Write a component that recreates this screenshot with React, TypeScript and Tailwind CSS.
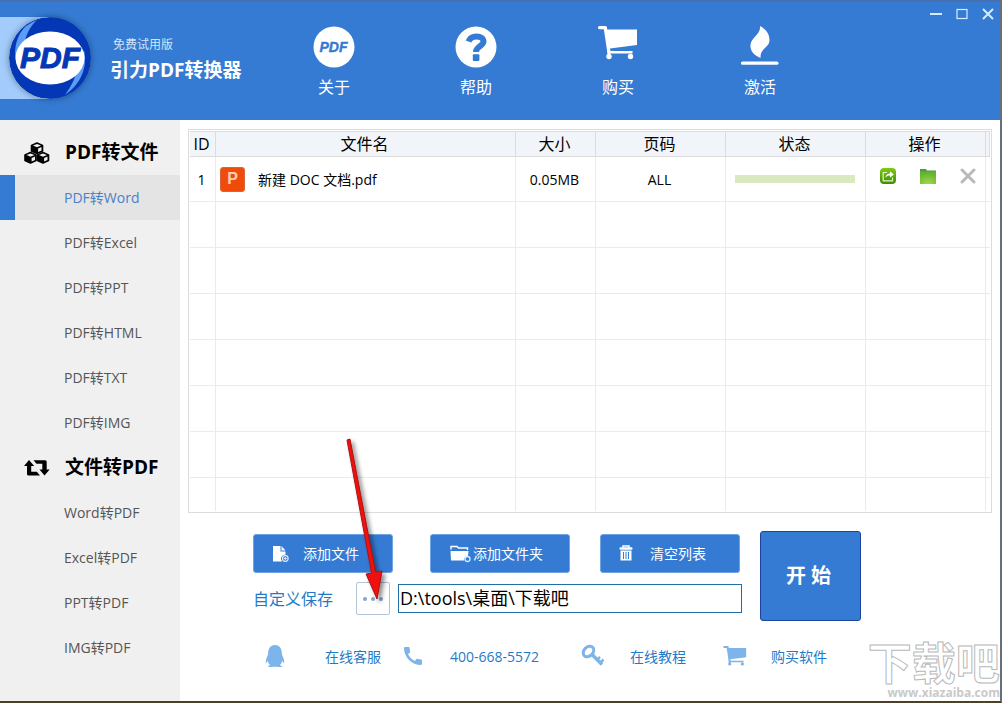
import React from 'react';
import { FaQq } from 'react-icons/fa';
import { MdCall } from 'react-icons/md';

type IconProps = { className?: string };

const LogoIcon = ({ className }: IconProps) => (
  <svg className={className} viewBox="0 0 82 82" aria-hidden="true">
    <circle cx="41" cy="41" r="41" fill="#0437b5" />
    <path d="M17 9 C9 16 4 30 7 44 L15 28 C17 18 20 11 28 2.500 Z" fill="#5b9cf5" />
    <path d="M75 33 C79 50 72 67 56 78 C63 68 67 60 67 54 Z" fill="#5b9cf5" />
    <ellipse cx="41" cy="41" rx="34.500" ry="26.500" fill="#fff" />
    <text
      x="41"
      y="51"
      textAnchor="middle"
      fontFamily="Liberation Sans, sans-serif"
      fontWeight="bold"
      fontStyle="italic"
      fontSize="30"
      fill="#0437b5"
      stroke="#0437b5"
    >
      PDF
    </text>
  </svg>
);

const AboutIcon = ({ className }: IconProps) => (
  <svg className={className} viewBox="0 0 42 42" aria-hidden="true">
    <circle cx="21" cy="21" r="20.500" fill="#fff" />
    <text
      x="20.500"
      y="26"
      textAnchor="middle"
      fontFamily="Liberation Sans, sans-serif"
      fontWeight="bold"
      fontStyle="italic"
      fontSize="14"
      fill="#357bd3"
      stroke="#357bd3"
      strokeWidth="0.400"
    >
      PDF
    </text>
  </svg>
);

const HelpIcon = ({ className }: IconProps) => (
  <svg className={className} viewBox="0 0 42 42" aria-hidden="true">
    <circle cx="21" cy="21" r="20.500" fill="#fff" />
    <path
      d="M13.500 15.500 C15 11.500 18 10.500 21.500 10.500 C26 10.500 28.500 12.500 28.500 15.500 C28.500 20 21 20.500 21 26"
      fill="none"
      stroke="#357bd3"
      strokeWidth="6"
    />
    <rect x="17.800" y="28.300" width="6.600" height="6.600" rx="1" fill="#357bd3" />
  </svg>
);

const CartIcon = ({ className }: IconProps) => (
  <svg className={className} viewBox="0 0 40 34" fill="currentColor" aria-hidden="true">
    <rect x="0" y="0" width="9" height="3.200" rx="1.500" />
    <path d="M5.500 1 H8.800 L9.300 3.500 H39 V19 L12 22.500 L12.300 25 H34.500 V27.600 H9.500 Z" />
    <circle cx="11" cy="30.500" r="2.700" />
    <circle cx="32.500" cy="30.500" r="2.700" />
    <path d="M9.500 24 H12.300 V30 H9.500 Z" />
  </svg>
);

const FlameIcon = ({ className }: IconProps) => (
  <svg className={className} viewBox="0 0 38 40" aria-hidden="true">
    <path
      d="M19 0 C25 3 28.500 8 28.500 14 C28.500 22 19 22 19.500 32 C12 29 9 24 9.500 19 C10 11 20 9 19 0 Z"
      fill="#fff"
    />
    <rect x="0" y="35.500" width="37.500" height="3.300" rx="1.600" fill="#fff" />
  </svg>
);

const CubesIcon = ({ className }: IconProps) => (
  <svg className={className} viewBox="0 0 26 22" aria-hidden="true">
    {[
      'translate(6.500 0)',
      'translate(0 9.500)',
      'translate(12.500 9.500)',
    ].map((transform) => (
      <g key={transform} transform={transform} stroke="#000" strokeLinejoin="round">
        <path d="M1 3.500 L6.500 1 L12 3.500 V9 L6.500 11.500 L1 9 Z" fill="#000" strokeWidth="1.600" />
        <path d="M2.500 3.600 L6.500 1.900 L10.500 3.600 L6.500 5.300 Z" fill="#f0f0f0" stroke="none" />
        <path d="M7.600 6.600 L11 5.100 V8.400 L7.600 10 Z" fill="#f0f0f0" stroke="none" />
      </g>
    ))}
  </svg>
);

const SwapIcon = ({ className }: IconProps) => (
  <svg className={className} viewBox="0 0 26 16" fill="#000" aria-hidden="true">
    <path d="M5 0 L10.200 6 H7.200 V11.800 H12.800 L16 15.500 H4.500 Q3 15.500 3 14 V6 H0 Z" />
    <path d="M20.500 15.500 L15.500 9.500 H18.300 V3.800 H12.500 L9.500 0.300 H21.200 Q22.700 0.300 22.700 1.800 V9.500 H25.700 Z" />
  </svg>
);

const FileAddIcon = ({ className }: IconProps) => (
  <svg className={className} viewBox="0 0 18 18" aria-hidden="true">
    <path d="M1 1 H8.500 V6.500 H13.500 V9.800 A4 4 0 0 0 10 16.500 H1 Z M9.500 1 L13.500 5.500 H9.500 Z" fill="#fff" />
    <circle cx="13.300" cy="13.500" r="2.800" fill="none" stroke="#dcecff" strokeWidth="1.200" />
    <path d="M11.800 13.500 H14.800 M13.300 12 V15" stroke="#dcecff" />
  </svg>
);

const FolderAddIcon = ({ className }: IconProps) => (
  <svg className={className} viewBox="0 0 21 18" aria-hidden="true">
    <path d="M1 4.500 V1.500 H7 L8.500 3 H17.500 V5" fill="none" stroke="#fff" strokeWidth="1.400" />
    <path d="M0.500 6 H18.500 L18 11 A4 4 0 0 0 14 15.500 H1 Z" fill="#fff" />
    <circle cx="17.500" cy="14" r="2.500" fill="none" stroke="#dcecff" strokeWidth="1.300" />
  </svg>
);

const TrashIcon = ({ className }: IconProps) => (
  <svg className={className} viewBox="0 0 14 17" aria-hidden="true">
    <path d="M4 2.500 V1 H10 V2.500" fill="none" stroke="#fff" strokeWidth="1.500" />
    <rect x="0.500" y="2.300" width="13" height="2.500" rx="1" fill="#fff" />
    <path d="M1.500 5.500 H12.500 V15.500 H1.500 Z" fill="#fff" />
    <path d="M4.500 7 V14 M7 7 V14 M9.500 7 V14" stroke="#357bd3" />
  </svg>
);

const KeyIcon = ({ className }: IconProps) => (
  <svg className={className} viewBox="0 0 24 24" fill="none" stroke="currentColor" aria-hidden="true">
    <ellipse cx="7.500" cy="7.500" rx="6" ry="4.500" transform="rotate(-45 7.500 7.500)" strokeWidth="3" />
    <path d="M11 10.500 L21 20.500" strokeWidth="3.600" />
    <path d="M16 16 L19 12.800 M19.500 18.500 L22.500 15.500" strokeWidth="2.500" />
  </svg>
);

const ShareIcon = ({ className }: IconProps) => (
  <svg className={className} viewBox="0 0 16 16" aria-hidden="true">
    <defs>
      <linearGradient id="shareFill" x1="0" y1="0" x2="0" y2="1">
        <stop offset="0" stopColor="#7fca12" />
        <stop offset="1" stopColor="#3f8a08" />
      </linearGradient>
    </defs>
    <rect width="16" height="16" rx="4" fill="url(#shareFill)" />
    <path d="M7 4.500 H3.200 V12.800 H12.500 V9.500" fill="none" stroke="#e4f5cb" strokeWidth="1.200" />
    <path d="M5.500 10 C5.500 7 7.500 5.500 10 5.500 V3.300 L14 6.500 L10 9.500 V7.500 C8 7.500 6.500 8 5.500 10 Z" fill="#fff" />
  </svg>
);

const FolderIcon = ({ className }: IconProps) => (
  <svg className={className} viewBox="0 0 16 15" aria-hidden="true">
    <defs>
      <radialGradient id="folderFill" cx="0.500" cy="1" r="0.900">
        <stop offset="0" stopColor="#a5d84a" />
        <stop offset="1" stopColor="#63b32e" />
      </radialGradient>
    </defs>
    <path d="M0 0 H6 L7 1.500 H16 V4 H0 Z" fill="#4a9a4a" />
    <rect y="2.500" width="16" height="12.500" fill="url(#folderFill)" />
  </svg>
);

const navItems = [
  { label: '关于', icon: AboutIcon, size: 'h-[42px] w-[42px]' },
  { label: '帮助', icon: HelpIcon, size: 'h-[42px] w-[42px]' },
  { label: '购买', icon: CartIcon, size: 'h-[34px] w-10' },
  { label: '激活', icon: FlameIcon, size: 'h-10 w-[38px]' },
];

const menuGroups = [
  {
    title: 'PDF转文件',
    icon: CubesIcon,
    size: 'h-[22px] w-[26px]',
    items: ['PDF转Word', 'PDF转Excel', 'PDF转PPT', 'PDF转HTML', 'PDF转TXT', 'PDF转IMG'],
  },
  {
    title: '文件转PDF',
    icon: SwapIcon,
    size: 'h-4 w-[26px]',
    items: ['Word转PDF', 'Excel转PDF', 'PPT转PDF', 'IMG转PDF'],
  },
];

const columns = ['ID', '文件名', '大小', '页码', '状态', '操作', ''];
const emptyRows = [1, 2, 3, 4, 5, 6];

const Header = () => (
  <header className="relative flex h-[120px] border-t-2 border-[#4a6fae] bg-[#357bd3] text-white">
    <div className="mt-[15px] flex h-[82px] w-[51px] shrink-0 bg-[#a3cbfb] pl-[9px]">
      <LogoIcon className="h-[82px] w-[82px] shrink-0 rounded-full shadow-[0_0_6px_rgba(0,0,0,0.4)]" />
    </div>
    <div className="ml-[59px] w-[153px] shrink-0 pt-[31px]">
      <p className="pl-[3px] text-[12px] leading-6 text-[#d3e4fa]">免费试用版</p>
      <h1 className="text-[19px] leading-[26px] font-bold whitespace-nowrap">引力PDF转换器</h1>
    </div>
    <nav className="flex pt-6">
      {navItems.map(({ label, icon: Icon, size }) => (
        <button key={label} type="button" className="flex w-[142px] flex-col items-center">
          <span className="flex h-[42px] items-start">
            <Icon className={size} />
          </span>
          <span className="mt-[7px] text-[16px] leading-6">{label}</span>
        </button>
      ))}
    </nav>
    <div className="absolute top-1 right-1.5 flex gap-3.5 text-[#d5ecff]">
      <button type="button" aria-label="最小化">
        <svg className="h-4 w-3" viewBox="0 0 12 16">
          <path d="M0 8 H12" stroke="currentColor" strokeWidth="2" />
        </svg>
      </button>
      <button type="button" aria-label="最大化">
        <svg className="h-4 w-3" viewBox="0 0 12 16" fill="none">
          <rect x="1" y="3.500" width="10" height="9" stroke="currentColor" strokeWidth="1.200" />
        </svg>
      </button>
      <button type="button" aria-label="关闭">
        <svg className="h-4 w-3" viewBox="0 0 12 16">
          <path d="M1 3 L11 13 M11 3 L1 13" stroke="currentColor" strokeWidth="2" />
        </svg>
      </button>
    </div>
  </header>
);

const Sidebar = () => (
  <aside className="w-[180px] shrink-0 bg-[#f0f0f0] pt-2.5">
    {menuGroups.map(({ title, icon: Icon, size, items }) => (
      <section key={title}>
        <h2 className="flex h-[45px] items-center gap-[15px] pl-6 text-[19px] font-bold text-black">
          <Icon className={size} />
          {title}
        </h2>
        {items.map((item) => (
          <button
            key={item}
            type="button"
            className={
              item === 'PDF转Word'
                ? 'flex h-[45px] w-full items-center border-l-[15px] border-[#357bd3] bg-[#e4e4e4] pl-[49px] text-[14px] text-[#4a80c4]'
                : 'flex h-[45px] w-full items-center pl-16 text-[14px] text-[#555]'
            }
          >
            {item}
          </button>
        ))}
      </section>
    ))}
  </aside>
);

const FileTable = () => (
  <div className="border border-[#dcdcdc] p-px">
    <table className="w-full table-fixed border-separate border-spacing-0 text-black">
      <colgroup>
        <col className="w-[26px]" />
        <col />
        <col className="w-[80px]" />
        <col className="w-[130px]" />
        <col className="w-[140px]" />
        <col className="w-[120px]" />
        <col className="w-[4px]" />
      </colgroup>
      <thead>
        <tr className="h-[26px]">
          {columns.map((column, index) => (
            <th
              key={index}
              className="border-t border-r border-b border-[#dcdcdc] bg-[#f1f5fa] p-0 pr-0.5 text-[16px] leading-6 font-normal"
            >
              {column}
            </th>
          ))}
        </tr>
      </thead>
      <tbody className="[&_td]:border-r [&_td]:border-b [&_td]:border-[#ebebeb] [&_td]:p-0 [&_td]:pr-0.5 [&_td:last-child]:border-r-0 [&_tr:last-child_td]:border-b-0">
        <tr className="h-[45px] text-center text-[14px]">
          <td>1</td>
          <td>
            <div className="flex items-center gap-[13px] pl-1 text-left">
              <span className="flex h-[25px] w-[25px] items-center justify-center rounded-[3px] border border-[#d9663a] bg-[#f04b08] font-['Liberation_Sans',sans-serif] text-[16px] leading-none font-bold text-[#ffd0b8]">
                P
              </span>
              新建 DOC 文档.pdf
            </div>
          </td>
          <td>0.05MB</td>
          <td>ALL</td>
          <td>
            <div className="mx-auto h-2 w-[120px] bg-[#dbe9c1]" />
          </td>
          <td>
            <div className="flex items-center justify-center gap-6 pb-1.5 pl-1.5">
              <button type="button" aria-label="打开文件">
                <ShareIcon className="h-4 w-4" />
              </button>
              <button type="button" aria-label="打开文件夹">
                <FolderIcon className="h-[15px] w-4" />
              </button>
              <button type="button" aria-label="删除">
                <svg className="h-4 w-4" viewBox="0 0 16 16">
                  <path d="M2 2 L14 14 M14 2 L2 14" stroke="#b9b9b9" strokeWidth="3" strokeLinecap="round" />
                </svg>
              </button>
            </div>
          </td>
          <td />
        </tr>
        {emptyRows.map((row) => (
          <tr key={row} className="h-[46px]">
            {columns.map((_, index) => (
              <td key={index} />
            ))}
          </tr>
        ))}
        <tr className="h-[33px]">
          {columns.map((_, index) => (
            <td key={index} />
          ))}
        </tr>
      </tbody>
    </table>
  </div>
);

const buttonClass =
  'flex h-[39px] w-[140px] items-center rounded-[3px] border border-[#6fa3e3] bg-[#357bd3] text-[14px] text-white';

const Actions = () => (
  <div className="flex pt-[18px] pl-[65px]">
    <div className="pt-[3px]">
      <div className="flex">
        <button type="button" className={`${buttonClass} gap-[13px] pl-[18px]`}>
          <FileAddIcon className="h-[18px] w-[18px]" />
          添加文件
        </button>
        <button type="button" className={`${buttonClass} ml-[37px] gap-0.5 pl-[19px]`}>
          <FolderAddIcon className="h-[18px] w-[21px]" />
          添加文件夹
        </button>
        <button type="button" className={`${buttonClass} ml-[30px] gap-[17px] pl-[18px]`}>
          <TrashIcon className="h-[17px] w-[14px]" />
          清空列表
        </button>
      </div>
      <div className="mt-[9px] flex items-center">
        <label htmlFor="savePath" className="w-[103px] text-[16px] text-[#1f7bc8]">
          自定义保存
        </label>
        <button
          type="button"
          aria-label="浏览"
          className="flex h-[33px] w-[34px] items-center justify-center gap-1 rounded-[2px] border border-[#b4c4d8]"
        >
          <span className="h-1 w-1 rounded-full bg-[#7fa6d6]" />
          <span className="h-1 w-1 rounded-full bg-[#7fa6d6]" />
          <span className="h-1 w-1 rounded-full bg-[#7fa6d6]" />
        </button>
        <input
          id="savePath"
          type="text"
          defaultValue="D:\tools\桌面\下载吧"
          className="ml-2 h-[29px] w-[344px] border border-[#1f6fa8] bg-white px-px pb-1 text-[18px] text-black outline-none"
        />
      </div>
    </div>
    <button
      type="button"
      className="ml-[18px] h-[90px] w-[101px] rounded-[3px] border border-[#1c449f] bg-[#357bd3] pr-1 text-[20px] font-bold text-white"
    >
      开 始
    </button>
  </div>
);

const Contacts = () => (
  <footer className="flex pt-[23px] pl-[76px] text-[14px] text-[#1f7bc8] [&_svg]:text-[#7db4ea]">
    <a href="#service" className="flex w-[137px] items-center gap-[39px]">
      <FaQq className="h-[22px] w-[22px]" />
      在线客服
    </a>
    <a href="#phone" className="flex w-[180px] items-center gap-[25px]">
      <MdCall className="h-6 w-6" />
      400-668-5572
    </a>
    <a href="#course" className="flex w-[142px] items-center gap-[25px]">
      <KeyIcon className="h-6 w-6" />
      在线教程
    </a>
    <a href="#buy" className="flex items-center gap-6">
      <CartIcon className="h-5 w-6" />
      购买软件
    </a>
  </footer>
);

const Pointer = () => (
  <svg
    className="pointer-events-none absolute top-[316px] left-[156px] h-[170px] w-[60px] drop-shadow-[3px_3px_2px_rgba(0,0,0,0.45)]"
    viewBox="0 0 60 170"
    aria-hidden="true"
  >
    <path d="M11 4 L14 3 L39.500 136 L46 135 L41 163 L30 138 L35.500 137 Z" fill="#f01010" stroke="#b01010" />
  </svg>
);

const Watermark = () => (
  <div className="pointer-events-none absolute right-0 bottom-0 text-center whitespace-nowrap">
    <p className="text-[44px] leading-[44px] font-bold text-white [-webkit-text-stroke:1px_#b9b9b9]">下载吧</p>
    <p className="pl-5 text-[12px] leading-4 font-bold text-[#c9c9c9]">www.xiazaiba.com</p>
  </div>
);

const App = () => {
  return (
    <div className="flex min-h-screen flex-col border-r-2 border-b-2 border-r-[#66707c] border-b-[#4d4029] bg-white font-['Open_Sans','Noto_Sans_CJK_SC',sans-serif]">
      <Header />
      <div className="flex flex-1">
        <Sidebar />
        <main className="relative min-w-0 flex-1 px-2 pt-[9px]">
          <FileTable />
          <Actions />
          <Contacts />
          <Pointer />
          <Watermark />
        </main>
      </div>
    </div>
  );
};

export default App;
